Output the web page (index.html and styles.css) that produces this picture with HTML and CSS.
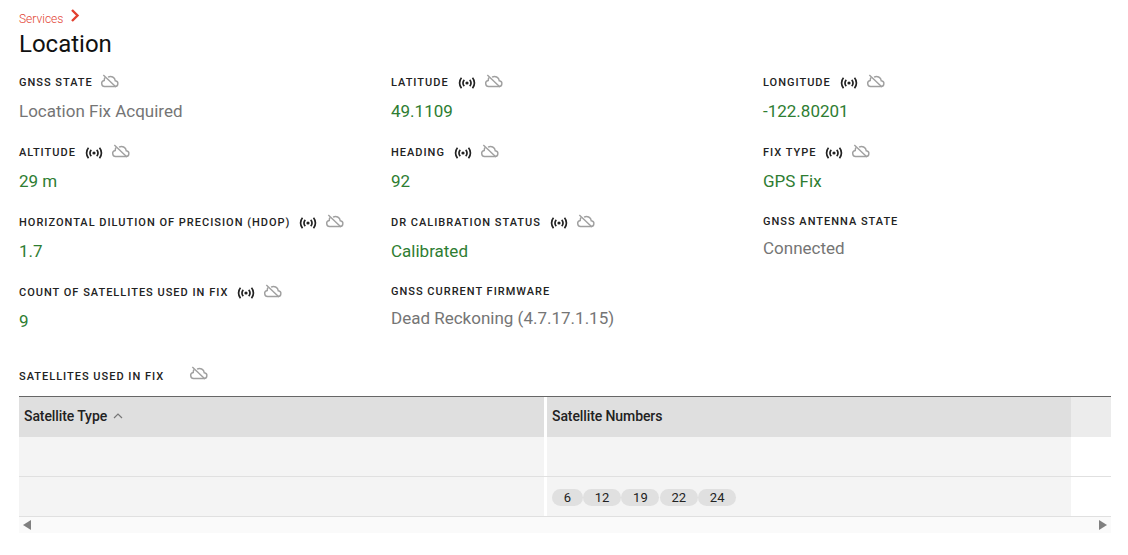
FILE: index.html
```html
<!DOCTYPE html>
<html lang="en">
<head>
<meta charset="utf-8">
<title>Location</title>
<link rel="stylesheet" href="styles.css">
</head>
<body>
<svg class="defs" width="0" height="0" aria-hidden="true">
  <symbol id="cloud" viewBox="0 0 20 14">
    <path d="M5.500 12.800h10a3 3 0 0 0 .6-6 5 5 0 0 0-7.600-3.800M5.400 3.400A4 4 0 0 0 4.500 6.400 3.200 3.200 0 0 0 5.500 12.800" fill="none" stroke="#a0a0a0" stroke-width="1.500"/>
    <path d="M3.500 .6 16.800 13.400" fill="none" stroke="#a0a0a0" stroke-width="1.500"/>
  </symbol>
  <symbol id="live" viewBox="0 0 18 12">
    <circle cx="9" cy="6" r="1.600" fill="#222"/>
    <path d="M6.300 2.800a4.500 4.500 0 0 0 0 6.400M11.700 2.800a4.500 4.500 0 0 1 0 6.400M3.500 .8a8 8 0 0 0 0 10.400M14.500 .8a8 8 0 0 1 0 10.400" fill="none" stroke="#222" stroke-width="1.700"/>
  </symbol>
</svg>
<main class="page">
  <nav class="crumb"><span class="crumb-link">Services</span><svg class="chev" viewBox="0 0 10 13"><path d="M2 1l5.500 5.500L2 12" fill="none" stroke="#e2402f" stroke-width="2.400"/></svg></nav>
  <h1 class="title">Location</h1>
  <section class="grid">
    <div class="field"><div class="label">GNSS STATE<svg class="ic cloud first"><use href="#cloud"/></svg></div><div class="value grey">Location Fix Acquired</div></div>
    <div class="field"><div class="label">LATITUDE<svg class="ic live"><use href="#live"/></svg><svg class="ic cloud"><use href="#cloud"/></svg></div><div class="value green">49.1109</div></div>
    <div class="field"><div class="label">LONGITUDE<svg class="ic live"><use href="#live"/></svg><svg class="ic cloud"><use href="#cloud"/></svg></div><div class="value green">-122.80201</div></div>

    <div class="field"><div class="label">ALTITUDE<svg class="ic live"><use href="#live"/></svg><svg class="ic cloud"><use href="#cloud"/></svg></div><div class="value green">29 m</div></div>
    <div class="field"><div class="label">HEADING<svg class="ic live"><use href="#live"/></svg><svg class="ic cloud"><use href="#cloud"/></svg></div><div class="value green">92</div></div>
    <div class="field"><div class="label">FIX TYPE<svg class="ic live"><use href="#live"/></svg><svg class="ic cloud"><use href="#cloud"/></svg></div><div class="value green">GPS Fix</div></div>

    <div class="field"><div class="label">HORIZONTAL DILUTION OF PRECISION (HDOP)<svg class="ic live"><use href="#live"/></svg><svg class="ic cloud"><use href="#cloud"/></svg></div><div class="value green">1.7</div></div>
    <div class="field"><div class="label">DR CALIBRATION STATUS<svg class="ic live"><use href="#live"/></svg><svg class="ic cloud"><use href="#cloud"/></svg></div><div class="value green">Calibrated</div></div>
    <div class="field"><div class="label plain">GNSS ANTENNA STATE</div><div class="value grey">Connected</div></div>

    <div class="field"><div class="label">COUNT OF SATELLITES USED IN FIX<svg class="ic live"><use href="#live"/></svg><svg class="ic cloud"><use href="#cloud"/></svg></div><div class="value green">9</div></div>
    <div class="field"><div class="label plain">GNSS CURRENT FIRMWARE</div><div class="value grey">Dead Reckoning (4.7.17.1.15)</div></div>
  </section>
  <section class="sats">
    <div class="label sats-label">SATELLITES USED IN FIX<svg class="ic cloud wide"><use href="#cloud"/></svg></div>
    <div class="table">
      <div class="row head">
        <div class="cell c1">Satellite Type<svg class="sort" viewBox="0 0 10 6"><path d="M1 5l4-4 4 4" fill="none" stroke="#777" stroke-width="1.200"/></svg></div>
        <div class="cell c2">Satellite Numbers</div>
        <div class="cell c3"></div>
      </div>
      <div class="row">
        <div class="cell c1"></div>
        <div class="cell c2"></div>
        <div class="cell c3"></div>
      </div>
      <div class="row">
        <div class="cell c1"></div>
        <div class="cell c2 chips"><span class="chip">6</span><span class="chip">12</span><span class="chip">19</span><span class="chip">22</span><span class="chip">24</span></div>
        <div class="cell c3"></div>
      </div>
    </div>
    <div class="scrollbar"><span class="arrow left"></span><span class="arrow right"></span></div>
  </section>
</main>
</body>
</html>
```

FILE: styles.css
```css
* { box-sizing: border-box; }
html, body { margin: 0; background: #fff; }
body { font-family: Roboto, "Liberation Sans", sans-serif; color: #111; overflow: hidden; }
.defs { position: absolute; }
.page { padding: 10px 17px 0 19px; width: 1128px; height: 555px; }
.crumb { display: flex; align-items: flex-start; height: 20px; font-size: 12px; font-weight: 300; line-height: 17px; color: #e2402f; }
.crumb-link { margin-top: 1px; }
.chev { width: 10px; height: 13px; margin-left: 7px; margin-top: -1px; }
.title { margin: 0; font-size: 24px; font-weight: 400; line-height: 28px; color: #111; }
.grid { display: grid; grid-template-columns: repeat(3, 372px); grid-auto-rows: 70px; margin-top: 14px; }
.field { display: flex; flex-direction: column; }
.label { display: flex; align-items: center; height: 20px; font-size: 11px; font-weight: 500; letter-spacing: 1px; color: #222; white-space: nowrap; }
.value { font-size: 17px; line-height: 20px; margin-top: 9px; }
.label.plain { height: 18px; }
.label.plain + .value { margin-top: 8px; }
.grey { color: #757575; }
.green { color: #2e7d32; }
.ic { flex: none; display: block; }
.cloud { width: 19px; height: 14px; margin-left: 8px; margin-top: -3px; }
.cloud.first { margin-left: 7px; }
.cloud.wide { margin-left: 25px; margin-top: -7px; }
.live { width: 18px; height: 12px; margin-left: 9px; margin-top: 2px; }
.sats { margin-top: 14px; }
.sats-label { height: 20px; }
.table { margin-top: 10px; border-top: 1px solid #666; width: 1092px; }
.row { display: flex; height: 40px; border-bottom: 1px solid #e0e0e0; }
.row.head { height: 40px; border-bottom: 0; font-size: 14px; font-weight: 500; letter-spacing: -0.1px; color: #222; }
.cell { display: flex; align-items: center; padding: 0 5px; background: #f4f4f4; }
.head .cell { padding-bottom: 2px; background: #dfdfdf; }
.c1 { width: 525px; margin-right: 3px; }
.c2 { width: 524px; }
.c3 { flex: 1; background: #fff; }
.head .c3 { background: #ececec; }
.chips { padding-top: 2px; }
.sort { width: 10px; height: 6px; margin-left: 6px; }
.chip { display: inline-flex; justify-content: center; align-items: center; height: 17px; border-radius: 9px; background: #e0e0e0; font-size: 13px; color: #222; width: 38px; margin-right: 0.400px; }
.chip:first-child { width: 31px; margin-right: 0; }
.scrollbar { display: flex; justify-content: space-between; align-items: center; width: 1092px; height: 16px; padding: 0 4px; background: #fafafa; }
.arrow { width: 0; height: 0; border-top: 5px solid transparent; border-bottom: 5px solid transparent; }
.arrow.left { border-right: 8px solid #808080; }
.arrow.right { border-left: 8px solid #808080; }
```
